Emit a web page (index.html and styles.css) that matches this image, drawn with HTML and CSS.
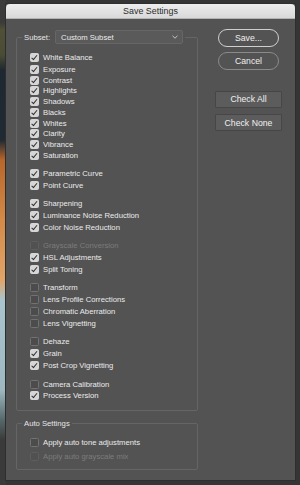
FILE: index.html
```html
<!DOCTYPE html>
<html lang="en">
<head>
    <meta charset="UTF-8">
    <meta name="viewport" content="width=device-width, initial-scale=1.0">
    <title>Save Settings</title>
    <link rel="stylesheet" href="styles.css">
</head>
<body>
    <div class="window">
        <div class="titlebar">Save Settings</div>
        <div class="content">
            <div class="left">
                <fieldset class="group main">
                    <legend class="subset">
                        <span class="subset-label">Subset:</span>
                        <span class="select">Custom Subset
                            <svg class="chevron" width="6" height="4" viewBox="0 0 6 4"><polyline points="0.5,0.8 3,3.2 5.5,0.8" fill="none" stroke="#c4c4c4" stroke-width="1"/></svg>
                        </span>
                    </legend>
                    <div class="list">
                        <label class="item on single"><span class="box"></span>White Balance</label>
                        <div class="set tight">
                            <label class="item on"><span class="box"></span>Exposure</label>
                            <label class="item on"><span class="box"></span>Contrast</label>
                            <label class="item on"><span class="box"></span>Highlights</label>
                            <label class="item on"><span class="box"></span>Shadows</label>
                            <label class="item on"><span class="box"></span>Blacks</label>
                            <label class="item on"><span class="box"></span>Whites</label>
                            <label class="item on"><span class="box"></span>Clarity</label>
                            <label class="item on"><span class="box"></span>Vibrance</label>
                            <label class="item on"><span class="box"></span>Saturation</label>
                        </div>
                        <div class="set">
                            <label class="item on"><span class="box"></span>Parametric Curve</label>
                            <label class="item on"><span class="box"></span>Point Curve</label>
                        </div>
                        <div class="set">
                            <label class="item on"><span class="box"></span>Sharpening</label>
                            <label class="item on"><span class="box"></span>Luminance Noise Reduction</label>
                            <label class="item on"><span class="box"></span>Color Noise Reduction</label>
                        </div>
                        <div class="set">
                            <label class="item disabled"><span class="box"></span>Grayscale Conversion</label>
                            <label class="item on"><span class="box"></span>HSL Adjustments</label>
                            <label class="item on"><span class="box"></span>Split Toning</label>
                        </div>
                        <div class="set">
                            <label class="item"><span class="box"></span>Transform</label>
                            <label class="item"><span class="box"></span>Lens Profile Corrections</label>
                            <label class="item"><span class="box"></span>Chromatic Aberration</label>
                            <label class="item"><span class="box"></span>Lens Vignetting</label>
                        </div>
                        <div class="set">
                            <label class="item"><span class="box"></span>Dehaze</label>
                            <label class="item on"><span class="box"></span>Grain</label>
                            <label class="item on"><span class="box"></span>Post Crop Vignetting</label>
                        </div>
                        <div class="set">
                            <label class="item"><span class="box"></span>Camera Calibration</label>
                            <label class="item on"><span class="box"></span>Process Version</label>
                        </div>
                    </div>
                </fieldset>
                <fieldset class="group auto">
                    <legend class="caption">Auto Settings</legend>
                    <div class="list">
                        <label class="item"><span class="box"></span>Apply auto tone adjustments</label>
                        <label class="item disabled"><span class="box"></span>Apply auto grayscale mix</label>
                    </div>
                </fieldset>
            </div>
            <div class="right">
                <button class="pill primary">Save...</button>
                <button class="pill">Cancel</button>
                <button class="flat first-flat">Check All</button>
                <button class="flat">Check None</button>
            </div>
        </div>
    </div>
</body>
</html>
```

FILE: styles.css
```css
body {
    margin: 0;
    padding: 0;
    height: 485px;
    overflow: hidden;
    font-family: "Liberation Sans", Arial, sans-serif;
    background:
        linear-gradient(180deg, #3a3a3a 0, #3a3a3a 22px, #4f5036 30px, #4a4c34 55px, #1e2830 70px, #1f2a33 140px, #b8662a 160px, #d48a48 220px, #e2a468 280px, #a9c4cc 300px, #9db8c0 390px, #56686a 420px, #3a3a3a 440px) left top / 6px 100% no-repeat,
        #353535;
}
.window {
    margin: 4px 0 0 6px;
    width: 289px;
    height: 476px;
    background-color: #535353;
    box-shadow: 0 0 0 1px #2e2e2e;
}
.titlebar {
    height: 15px;
    line-height: 15px;
    text-align: center;
    font-size: 8.9px;
    color: #2c2c2c;
    background: linear-gradient(#ededed, #d9d9d9);
    border-radius: 4px 4px 0 0;
    border-bottom: 1px solid #b4b4b4;
    box-sizing: border-box;
}
.content {
    display: flex;
    padding: 11px 0 0 10px;
}
.left {
    width: 182px;
}
.group {
    margin: 0;
    padding: 0;
    min-width: 0;
    border: 1px solid #656565;
    border-radius: 2px;
}
.main {
    padding-bottom: 8px;
}
.subset {
    display: flex;
    align-items: center;
    height: 14px;
    margin-left: 5px;
    padding: 0 2px;
    font-size: 7.7px;
    color: #e6e6e6;
}
.select {
    display: flex;
    align-items: center;
    justify-content: space-between;
    box-sizing: border-box;
    width: 128px;
    height: 14px;
    margin-left: 5px;
    padding: 0 4px 0 5px;
    background-color: #5a5a5a;
    border: 1px solid #666;
    border-radius: 2px;
    color: #ececec;
}
.list {
    padding: 7px 0 0 13px;
}
.item {
    display: flex;
    align-items: center;
    height: 11.9px;
    font-size: 7.7px;
    color: #ebebeb;
    white-space: nowrap;
}
.item.single {
    height: 12px;
}
.box {
    display: flex;
    align-items: center;
    justify-content: center;
    box-sizing: border-box;
    width: 9px;
    height: 9px;
    margin-right: 4px;
    background-color: #4c4c4c;
    border: 1px solid #727272;
    border-radius: 1.5px;
}
.item.on .box {
    background-color: #d6d6d6;
    border-color: #d6d6d6;
}
.item.on .box::after {
    content: "";
    width: 2px;
    height: 4.5px;
    margin-top: -1.5px;
    border-right: 1.6px solid #2e2e2e;
    border-bottom: 1.6px solid #2e2e2e;
    transform: rotate(40deg);
}
.item.disabled {
    color: #7c7c7c;
}
.item.disabled .box {
    background-color: #515151;
    border-color: #5e5e5e;
}
.set {
    margin-top: 6.5px;
}
.set.tight {
    margin-top: 1px;
    margin-bottom: 3px;
}
.set.tight .item {
    height: 10.75px;
}
.auto {
    margin-top: 8px;
    padding-bottom: 6px;
}
.caption {
    height: 10px;
    line-height: 10px;
    margin-left: 5px;
    padding: 0 2px;
    font-size: 7.7px;
    color: #e6e6e6;
}
.auto .item {
    height: 14px;
}
.auto .list {
    padding-top: 6.5px;
}
.right {
    display: flex;
    flex-direction: column;
    width: 67px;
    margin-left: 17px;
    margin-top: -1px;
}
button {
    font-family: "Liberation Sans", Arial, sans-serif;
    font-size: 8.7px;
    color: #f0f0f0;
    padding: 0;
    cursor: pointer;
}
.pill {
    height: 17.5px;
    margin: 0 3px;
    background-color: #535353;
    border: 1px solid #8a8a8a;
    border-radius: 9px;
}
.pill.primary {
    border: 1.5px solid #cfcfcf;
}
.pill + .pill {
    margin-top: 5.5px;
}
.flat {
    height: 16.6px;
    margin-top: 6.7px;
    background-color: #5c5c5c;
    border: 1px solid #464646;
    border-radius: 1px;
}
.flat.first-flat {
    margin-top: 21.5px;
}
```
